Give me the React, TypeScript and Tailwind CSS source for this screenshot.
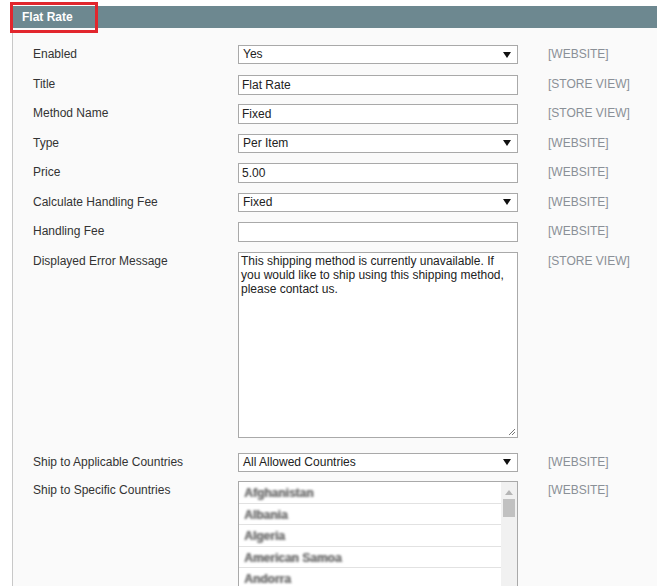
import React from "react";

const Arrow = () => (
  <svg width="8" height="6" viewBox="0 0 8 6" className="absolute right-[6px] top-1/2 -translate-y-1/2">
    <path d="M0 0 L8 0 L4 6 Z" fill="#111" />
  </svg>
);

function Select({ value }: { value: string }) {
  return (
    <div className="relative w-[280px] h-[19px] border border-[#a9a9a9] bg-white pl-[4px] text-[12px] leading-[17px] text-[#222]">
      {value}
      <Arrow />
    </div>
  );
}

function Input({ value }: { value: string }) {
  return (
    <div className="w-[280px] h-[20px] border border-[#a9a9a9] bg-white pl-[3px] text-[12px] leading-[18px] text-[#222]">
      {value}
    </div>
  );
}

function Row({
  label,
  scope,
  children,
  pb = "pb-[9.5px]",
}: {
  label: string;
  scope: string;
  children: React.ReactNode;
  pb?: string;
}) {
  return (
    <div className={`flex items-start ${pb}`}>
      <div className="w-[205px] text-[12px] leading-[18px] text-[#333]">{label}</div>
      <div className="w-[280px] min-h-[20px]">{children}</div>
      <div className="ml-[30px] text-[12px] leading-[18px] text-[#8a9097]">{scope}</div>
    </div>
  );
}

const countries = ["Afghanistan", "Albania", "Algeria", "American Samoa", "Andorra"];

export default function App() {
  return (
    <div className="relative w-[657px] h-[586px] bg-white overflow-hidden font-['Liberation_Sans',Arial,sans-serif]">
      <div className="pt-[6px] pl-[12px]">
        <div className="h-[22px] bg-[#6d8890] pl-[10px] text-[12px] font-bold leading-[22px] text-white">
          Flat Rate
        </div>
        <div className="h-[600px] border-l border-[#c8c8c8] bg-[#fafafa] pl-[20px] pt-[17px]">
          <Row label="Enabled" scope="[WEBSITE]">
            <Select value="Yes" />
          </Row>
          <Row label="Title" scope="[STORE VIEW]">
            <Input value="Flat Rate" />
          </Row>
          <Row label="Method Name" scope="[STORE VIEW]">
            <Input value="Fixed" />
          </Row>
          <Row label="Type" scope="[WEBSITE]">
            <Select value="Per Item" />
          </Row>
          <Row label="Price" scope="[WEBSITE]">
            <Input value="5.00" />
          </Row>
          <Row label="Calculate Handling Fee" scope="[WEBSITE]">
            <Select value="Fixed" />
          </Row>
          <Row label="Handling Fee" scope="[WEBSITE]">
            <Input value="" />
          </Row>
          <Row label="Displayed Error Message" scope="[STORE VIEW]" pb="pb-[15px]">
            <div className="relative w-[280px] h-[186px] border border-[#a9a9a9] bg-white px-[2px] pt-[1px] text-[12px] leading-[14px] text-[#222]">
              This shipping method is currently unavailable. If you would like to ship using this shipping method,
              please contact us.
              <svg width="9" height="9" viewBox="0 0 9 9" className="absolute right-[1px] bottom-[1px]">
                <path d="M8 2 L2 8 M8 5 L5 8" stroke="#777" strokeWidth="1" />
              </svg>
            </div>
          </Row>
          <Row label="Ship to Applicable Countries" scope="[WEBSITE]" pb="pb-[8.5px]">
            <Select value="All Allowed Countries" />
          </Row>
          <Row label="Ship to Specific Countries" scope="[WEBSITE]">
            <div className="relative w-[280px] h-[120px] border border-[#a9a9a9] bg-white flex">
              <div className="flex-1">
                {countries.map((c) => (
                  <div
                    key={c}
                    className="h-[21.5px] border-b border-[#e2e2e2] pl-[5px] pt-[1px] text-[12px] leading-[20px]"
                  >
                    <span className="font-bold text-[#777] blur-[1px] [text-shadow:1px_0_0_#999]">{c}</span>
                  </div>
                ))}
              </div>
              <div className="w-[16px] bg-[#f1f1f1] flex flex-col items-center">
                <svg width="8" height="5" viewBox="0 0 8 5" className="mt-[8px]">
                  <path d="M0 5 L4 0 L8 5 Z" fill="#b5b5b5" />
                </svg>
                <div className="mt-[4px] w-[12px] h-[18px] bg-[#c1c1c1]" />
              </div>
            </div>
          </Row>
        </div>
      </div>
      <div className="absolute left-[10px] top-[2px] w-[88px] h-[31px] border-[3px] border-[#e2262d]" />
    </div>
  );
}
